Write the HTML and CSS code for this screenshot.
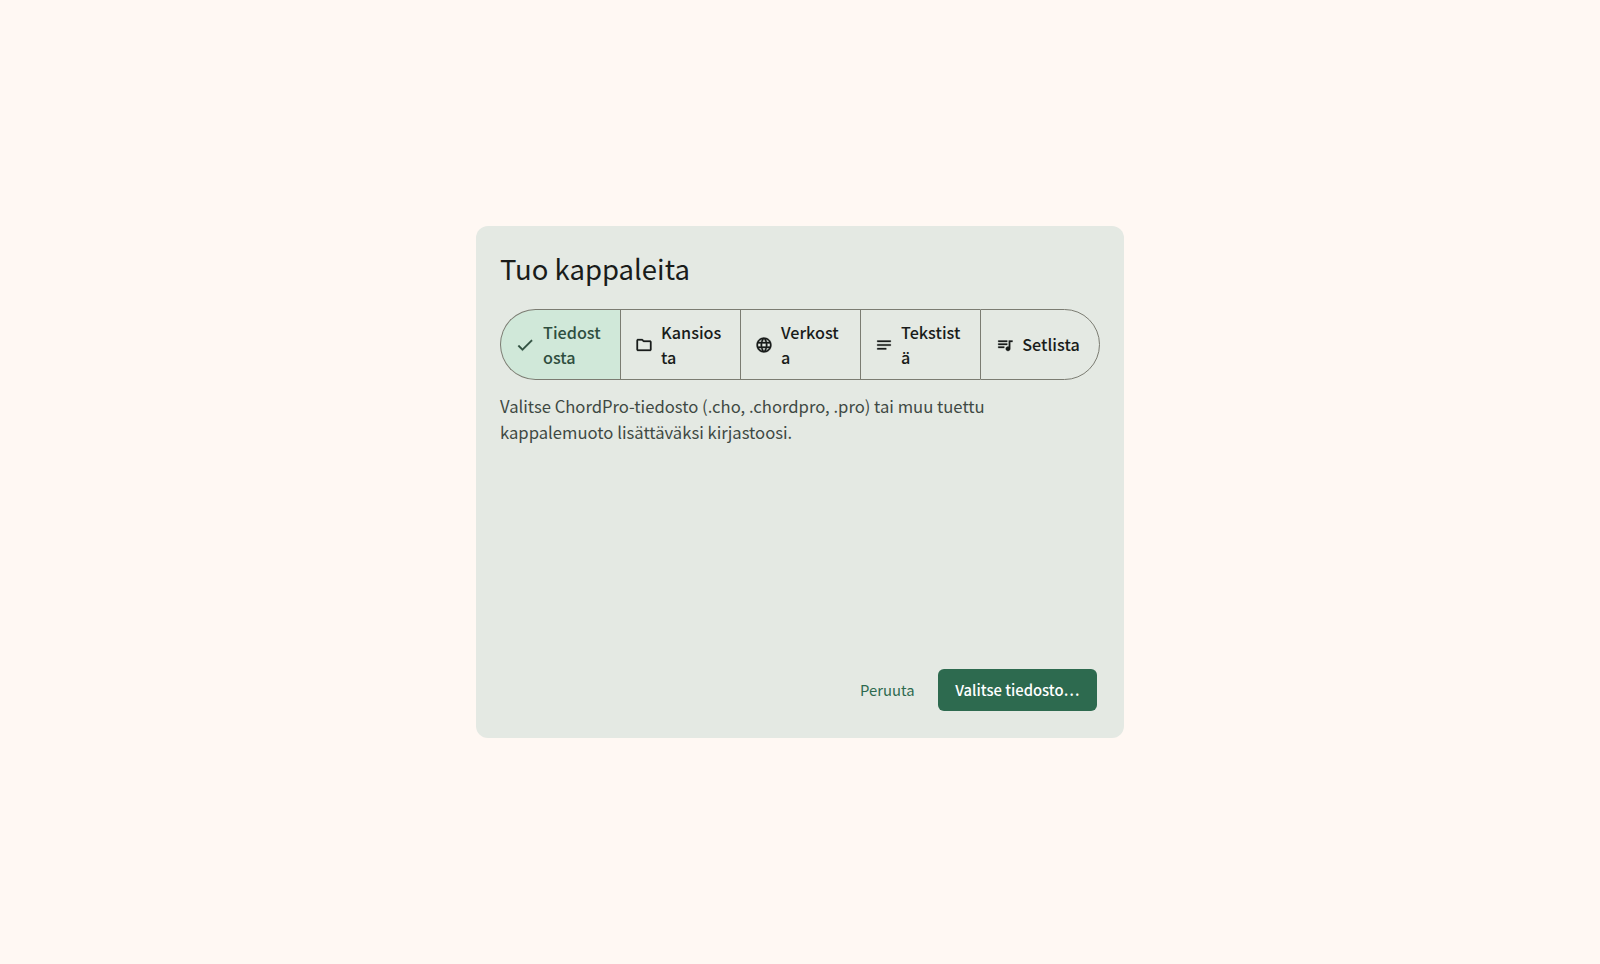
FILE: index.html
```html
<!DOCTYPE html>
<html lang="fi">
<head>
    <meta charset="UTF-8">
    <meta name="viewport" content="width=device-width, initial-scale=1.0">
    <title>Tuo kappaleita</title>
    <link rel="stylesheet" href="styles.css">
</head>
<body>
    <div class="dialog">
        <h2 class="dialog-title">Tuo kappaleita</h2>

        <div class="segments">
            <button class="segment selected">
                <svg class="segment-icon check-icon" viewBox="0 0 24 24"><path d="M9 16.17L4.83 12l-1.42 1.41L9 19 21 7l-1.41-1.41z"/></svg>
                <span class="segment-label">Tiedostosta</span>
            </button>
            <button class="segment">
                <svg class="segment-icon" viewBox="0 0 24 24"><path d="M9.17 6l2 2H20v10H4V6h5.17M10 4H4c-1.1 0-1.99.9-1.99 2L2 18c0 1.1.9 2 2 2h16c1.1 0 2-.9 2-2V8c0-1.1-.9-2-2-2h-8l-2-2z"/></svg>
                <span class="segment-label">Kansiosta</span>
            </button>
            <button class="segment">
                <svg class="segment-icon" viewBox="0 0 24 24"><path d="M11.99 2C6.47 2 2 6.48 2 12s4.47 10 9.99 10C17.52 22 22 17.52 22 12S17.52 2 11.99 2zm6.93 6h-2.95c-.32-1.25-.78-2.45-1.38-3.56 1.84.63 3.37 1.91 4.33 3.56zM12 4.04c.83 1.2 1.48 2.53 1.91 3.96h-3.82c.43-1.43 1.08-2.76 1.91-3.96zM4.26 14C4.1 13.36 4 12.69 4 12s.1-1.36.26-2h3.38c-.08.66-.14 1.32-.14 2 0 .68.06 1.34.14 2H4.26zm.82 2h2.95c.32 1.25.78 2.45 1.38 3.56-1.84-.63-3.37-1.9-4.33-3.56zm2.95-8H5.08c.96-1.66 2.49-2.93 4.33-3.56C8.81 5.55 8.35 6.75 8.03 8zM12 19.96c-.83-1.2-1.48-2.53-1.91-3.96h3.82c-.43 1.43-1.08 2.76-1.91 3.96zM14.34 14H9.66c-.09-.66-.16-1.32-.16-2 0-.68.07-1.35.16-2h4.68c.09.65.16 1.32.16 2 0 .68-.07 1.34-.16 2zm.25 5.56c.6-1.11 1.06-2.31 1.38-3.56h2.95c-.96 1.65-2.49 2.93-4.33 3.56zM16.36 14c.08-.66.14-1.32.14-2 0-.68-.06-1.34-.14-2h3.38c.16.64.26 1.31.26 2s-.1 1.36-.26 2h-3.38z"/></svg>
                <span class="segment-label">Verkosta</span>
            </button>
            <button class="segment">
                <svg class="segment-icon" viewBox="0 0 24 24"><path d="M3 18h12v-2H3v2zM3 6v2h18V6H3zm0 7h18v-2H3v2z"/></svg>
                <span class="segment-label">Tekstistä</span>
            </button>
            <button class="segment">
                <svg class="segment-icon" viewBox="0 0 24 24"><path d="M15 6H3v2h12V6zm0 4H3v2h12v-2zM3 16h8v-2H3v2zM17 6v8.18c-.31-.11-.65-.18-1-.18-1.66 0-3 1.34-3 3s1.34 3 3 3 3-1.34 3-3V8h3V6h-5z"/></svg>
                <span class="segment-label">Setlista</span>
            </button>
        </div>

        <p class="dialog-text">Valitse ChordPro-tiedosto (.cho, .chordpro, .pro) tai muu tuettu kappalemuoto lisättäväksi kirjastoosi.</p>

        <div class="dialog-actions">
            <button class="text-btn">Peruuta</button>
            <button class="primary-btn">Valitse tiedosto…</button>
        </div>
    </div>
</body>
</html>
```

FILE: styles.css
```css
* {
    box-sizing: border-box;
}

body {
    font-family: "Noto Sans CJK SC", "Noto Sans", sans-serif;
    background: #fff8f3;
    color: #191c1a;
    margin: 0;
    min-height: 100vh;
    display: flex;
    align-items: center;
    justify-content: center;
}

button {
    font-family: inherit;
}

.dialog {
    background: #e4e9e3;
    border-radius: 12px;
    width: 648px;
    height: 512px;
    padding: 24px;
    display: flex;
    flex-direction: column;
}

.dialog-title {
    font-size: 27.5px;
    font-weight: 400;
    line-height: 37px;
    margin: 0;
}

.segments {
    display: grid;
    grid-template-columns: repeat(5, 120px);
    margin-top: 22px;
}

.segment {
    min-width: 0;
    height: 71px;
    background: transparent;
    border: 1px solid #7b7c72;
    border-right: 0;
    color: #191c1a;
    font-size: 16.2px;
    font-weight: 500;
    line-height: 25.5px;
    padding: 1px 15px 0 14px;
    display: flex;
    align-items: center;
    justify-content: center;
    gap: 8px;
    text-align: left;
}

.segment:first-child {
    border-radius: 36px 0 0 36px;
}

.segment:last-child {
    border-right: 1px solid #7b7c72;
    border-radius: 0 36px 36px 0;
    padding-right: 18px;
}

.segment.selected {
    background: #d0e8d9;
    color: #2f4f3f;
}

.segment-icon {
    width: 18px;
    height: 18px;
    flex: none;
    fill: currentColor;
    stroke: currentColor;
    stroke-width: 0.4;
}

.check-icon {
    width: 20px;
    height: 20px;
}

.segment-label {
    min-width: 0;
    overflow-wrap: anywhere;
}

.dialog-text {
    font-size: 16.65px;
    line-height: 25.5px;
    color: #3f4944;
    margin: 14px 0 0;
}

.dialog-actions {
    margin-top: auto;
    padding: 0 3px 3px 0;
    display: flex;
    justify-content: flex-end;
    align-items: center;
    gap: 6px;
}

.text-btn {
    background: transparent;
    border: none;
    color: #2d6a4f;
    font-size: 14.8px;
    height: 42px;
    padding: 0 17px 2px;
}

.primary-btn {
    background: #2d6a4f;
    border: none;
    border-radius: 6px;
    color: #fff;
    font-size: 14.8px;
    font-weight: 500;
    height: 42px;
    width: 159.5px;
    padding: 0 0 2px;
}
```
